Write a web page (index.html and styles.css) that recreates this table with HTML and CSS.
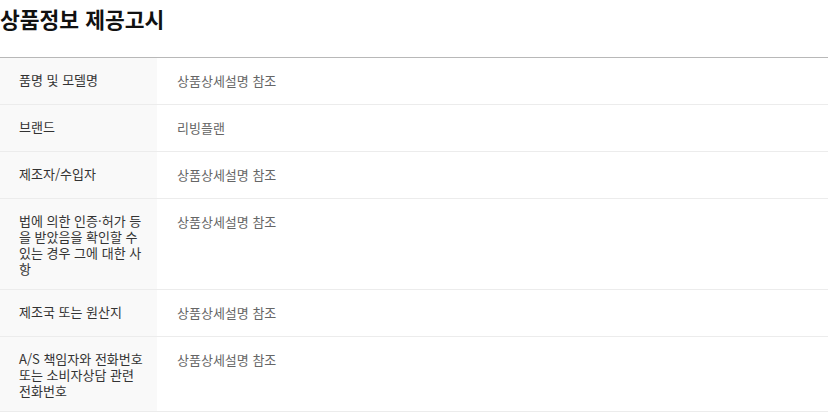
FILE: index.html
```html
<!DOCTYPE html>
<html lang="ko">
<head>
  <meta charset="UTF-8">
  <title>상품정보 제공고시</title>
  <link rel="stylesheet" href="styles.css">
</head>
<body>
  <div class="notice">
    <h2 class="notice-title">상품정보 제공고시</h2>
    <table class="notice-table">
      <tr>
        <th>품명 및 모델명</th>
        <td>상품상세설명 참조</td>
      </tr>
      <tr>
        <th>브랜드</th>
        <td>리빙플랜</td>
      </tr>
      <tr>
        <th>제조자/수입자</th>
        <td>상품상세설명 참조</td>
      </tr>
      <tr>
        <th>법에 의한 인증·허가 등을 받았음을 확인할 수 있는 경우 그에 대한 사항</th>
        <td>상품상세설명 참조</td>
      </tr>
      <tr>
        <th>제조국 또는 원산지</th>
        <td>상품상세설명 참조</td>
      </tr>
      <tr>
        <th>A/S 책임자와 전화번호 또는 소비자상담 관련 전화번호</th>
        <td>상품상세설명 참조</td>
      </tr>
    </table>
  </div>
</body>
</html>
```

FILE: styles.css
```css
body {
  margin: 0;
  padding: 0;
  background-color: #ffffff;
  font-family: "Noto Sans CJK KR", "Noto Sans", sans-serif;
}
.notice {
  width: 828px;
}
.notice-title {
  margin: 0;
  padding: 3px 0 0;
  height: 58px;
  box-sizing: border-box;
  font-size: 21.5px;
  font-weight: 700;
  line-height: 32px;
  color: #111111;
  border-bottom: 1px solid #b8b8b8;
}
.notice-table {
  width: 100%;
  border-collapse: collapse;
}
.notice-table th,
.notice-table td {
  padding: 13px 0 13px 19px;
  font-size: 13px;
  line-height: 20px;
  text-align: left;
  vertical-align: top;
  border-bottom: 1px solid #ececec;
}
.notice-table th {
  width: 126px;
  padding-top: 14px;
  padding-bottom: 12px;
  padding-right: 12px;
  font-weight: 400;
  line-height: 16px;
  color: #333333;
  background-color: #f9f9f9;
}
.notice-table td {
  padding-left: 20px;
  color: #666666;
}
```
